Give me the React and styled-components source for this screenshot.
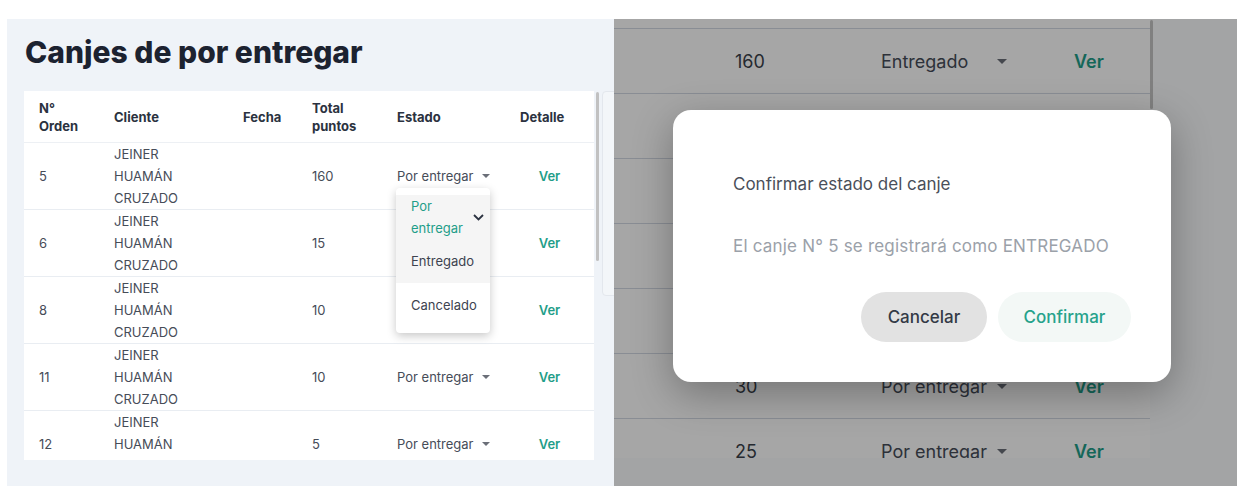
import React from 'react';
import styled, { createGlobalStyle } from 'styled-components';

const teal = '#1f9e89';

const GlobalStyle = createGlobalStyle`
    body {
        margin: 0;
        background: #ffffff;
        font-family: Inter, "Liberation Sans", sans-serif;
    }
`;

const Page = styled.div`
    display: flex;
    padding: 19px 0 0 7px;
`;

const LeftPanel = styled.section`
    width: 607px;
    height: 467px;
    box-sizing: border-box;
    padding: 15px 0 0 17px;
    background: #eff3f8;
    overflow: hidden;
`;

const Title = styled.h1`
    margin: 0 0 21px 1px;
    font-size: 30px;
    line-height: 36px;
    font-weight: 800;
    color: #1c2230;
`;

const TableArea = styled.div`
    display: flex;
    align-items: flex-start;
`;

const Card = styled.div`
    width: 570px;
    height: 369px;
    flex-shrink: 0;
    background: #ffffff;
    overflow: hidden;
`;

const Table = styled.table`
    width: 100%;
    border-collapse: collapse;
    table-layout: fixed;
`;

const Th = styled.th`
    height: 51px;
    padding: 0 15px;
    text-align: left;
    vertical-align: middle;
    font-size: 13px;
    line-height: 18px;
    font-weight: 700;
    color: #2b3240;
    border-bottom: 1px solid #edf0f4;
`;

const Td = styled.td`
    position: relative;
    height: 66px;
    padding: 0 ${(p) => (p.$wrap ? '40px' : '15px')} 0 15px;
    text-align: ${(p) => (p.$center ? 'center' : 'left')};
    vertical-align: middle;
    font-size: 13px;
    line-height: 22px;
    color: #464c58;
    border-bottom: 1px solid #e9edf2;
`;

const Link = styled.span`
    color: ${teal};
    font-weight: 600;
    font-size: ${(p) => (p.$big ? '18px' : '13px')};
`;

const Select = styled.span`
    display: inline-flex;
    align-items: center;
    justify-content: space-between;
    justify-self: start;
    gap: 8px;
    min-width: ${(p) => (p.$big ? '126px' : '0')};
    font-size: ${(p) => (p.$big ? '18px' : '13px')};
    color: #464c58;
`;

const Caret = ({ size = 8 }) => (
    <svg width={size} height={size / 2} viewBox="0 0 8 4">
        <path d="M0 0h8L4 4z" fill="#6b6f78" />
    </svg>
);

const Menu = styled.div`
    position: absolute;
    z-index: 10;
    top: 45px;
    left: 14px;
    width: 94px;
    padding: 7px 0 6px;
    background: #ffffff;
    border-radius: 4px;
    box-shadow: 0 3px 10px rgba(0, 0, 0, 0.22);
    text-align: left;
`;

const MenuItem = styled.div`
    display: flex;
    align-items: center;
    justify-content: space-between;
    min-height: 44px;
    box-sizing: border-box;
    padding: 0 6px 0 15px;
    line-height: 22px;
    font-size: 13px;
    background: ${(p) => (p.$shaded ? '#f5f5f5' : '#ffffff')};
    color: ${(p) => (p.$active ? teal : '#3d4350')};
`;

const MenuLabel = styled.span`
    width: 56px;
`;

const Scrollbar = styled.div`
    width: ${(p) => p.$w}px;
    height: ${(p) => p.$h}px;
    margin: 1px 0 0 ${(p) => p.$gap}px;
    flex-shrink: 0;
    background: ${(p) => p.$color};
    border-radius: 2px;
`;

const SideCard = styled.div`
    width: 20px;
    height: 205px;
    margin-left: 3px;
    flex-shrink: 0;
    box-sizing: border-box;
    background: #f3f6f9;
    border: 1px solid #e3e7ed;
    border-radius: 4px;
`;

const RightPanel = styled.section`
    position: relative;
    width: 623px;
    height: 467px;
    background: #fbfcfe;
    overflow: hidden;
`;

const ZoomTable = styled.div`
    display: flex;
    align-items: flex-start;
    width: 539px;
    height: 439px;
    overflow: hidden;
`;

const ZoomRows = styled.div`
    width: 536px;
    height: 439px;
    background: #ffffff;
    overflow: hidden;
`;

const Spacer = styled.div`
    height: 9px;
`;

const ZoomRow = styled.div`
    display: grid;
    grid-template-columns: 121px 146px 193px 1fr;
    align-items: center;
    height: 65px;
    box-sizing: border-box;
    border-top: 1px solid #d3d9e3;
    font-size: 18px;
    color: #3a3f4a;
`;

const Overlay = styled.div`
    position: absolute;
    inset: 0;
    background: rgba(0, 0, 0, 0.35);
`;

const Modal = styled.div`
    position: absolute;
    top: 91px;
    left: 59px;
    width: 498px;
    height: 272px;
    box-sizing: border-box;
    display: flex;
    flex-direction: column;
    padding: 62px 40px 40px 60px;
    background: #ffffff;
    border-radius: 18px;
    box-shadow: 0 12px 40px rgba(0, 0, 0, 0.3);
`;

const ModalTitle = styled.p`
    margin: 0;
    font-size: 17px;
    line-height: 24px;
    color: #4a4f5a;
`;

const ModalText = styled.p`
    margin: 38px 0 0;
    font-size: 17px;
    line-height: 24px;
    color: #9ba1a9;
    letter-spacing: 0.2px;
`;

const Actions = styled.div`
    display: flex;
    justify-content: flex-end;
    gap: 11px;
    margin-top: auto;
`;

const Button = styled.button`
    width: ${(p) => p.$w}px;
    height: 50px;
    border: none;
    border-radius: 25px;
    font-family: inherit;
    font-size: 17px;
    font-weight: 500;
    background: ${(p) => (p.$primary ? '#f3f8f6' : '#e2e2e2')};
    color: ${(p) => (p.$primary ? '#26a28b' : '#343a46')};
`;

const headers = [['N°', 'Orden'], ['Cliente'], ['Fecha'], ['Total', 'puntos'], ['Estado'], ['Detalle']];
const widths = [75, 129, 69, 85, 123, 89];
const orders = [
    { id: 5, points: 160 },
    { id: 6, points: 15 },
    { id: 8, points: 10 },
    { id: 11, points: 10 },
    { id: 12, points: 5 },
];
const zoomRows = [
    { points: 160, state: 'Entregado' },
    { points: 15, state: 'Por entregar' },
    { points: 10, state: 'Por entregar' },
    { points: 10, state: 'Por entregar' },
    { points: 40, state: 'Por entregar' },
    { points: 30, state: 'Por entregar' },
    { points: 25, state: 'Por entregar' },
];

const StateMenu = () => (
    <Menu>
        <MenuItem $active $shaded>
            <MenuLabel>Por entregar</MenuLabel>
            <svg width="11" height="7" viewBox="0 0 11 7">
                <path d="M1 1l4.5 4.5L10 1" fill="none" stroke="#2b3240" strokeWidth="1.8" />
            </svg>
        </MenuItem>
        <MenuItem $shaded>Entregado</MenuItem>
        <MenuItem>Cancelado</MenuItem>
    </Menu>
);

const App = () => (
    <Page>
        <GlobalStyle />
        <LeftPanel>
            <Title>Canjes de por entregar</Title>
            <TableArea>
                <Card>
                    <Table>
                        <colgroup>
                            {widths.map((w, i) => (
                                <col key={i} style={{ width: w }} />
                            ))}
                        </colgroup>
                        <thead>
                            <tr>
                                {headers.map((lines) => (
                                    <Th key={lines.join()}>
                                        {lines.map((l, i) => (
                                            <React.Fragment key={l}>
                                                {i > 0 && <br />}
                                                {l}
                                            </React.Fragment>
                                        ))}
                                    </Th>
                                ))}
                            </tr>
                        </thead>
                        <tbody>
                            {orders.map((o, i) => (
                                <tr key={o.id}>
                                    <Td>{o.id}</Td>
                                    <Td $wrap>JEINER HUAMÁN CRUZADO</Td>
                                    <Td />
                                    <Td>{o.points}</Td>
                                    <Td>
                                        <Select>
                                            Por entregar <Caret />
                                        </Select>
                                        {i === 0 && <StateMenu />}
                                    </Td>
                                    <Td $center>
                                        <Link>Ver</Link>
                                    </Td>
                                </tr>
                            ))}
                        </tbody>
                    </Table>
                </Card>
                <Scrollbar $w={3} $h={169} $gap={2} $color="#c1c1c1" />
                <SideCard />
            </TableArea>
        </LeftPanel>
        <RightPanel>
            <ZoomTable>
                <ZoomRows>
                    <Spacer />
                    {zoomRows.map((r, i) => (
                        <ZoomRow key={i}>
                            <span />
                            <span>{r.points}</span>
                            <Select $big>
                                {r.state} <Caret size={10} />
                            </Select>
                            <Link $big>Ver</Link>
                        </ZoomRow>
                    ))}
                </ZoomRows>
                <Scrollbar $w={3} $h={89} $gap={0} $color="#c5c5c5" />
            </ZoomTable>
            <Overlay>
                <Modal>
                    <ModalTitle>Confirmar estado del canje</ModalTitle>
                    <ModalText>El canje N° 5 se registrará como ENTREGADO</ModalText>
                    <Actions>
                        <Button $w={126}>Cancelar</Button>
                        <Button $w={133} $primary>
                            Confirmar
                        </Button>
                    </Actions>
                </Modal>
            </Overlay>
        </RightPanel>
    </Page>
);

export default App;
